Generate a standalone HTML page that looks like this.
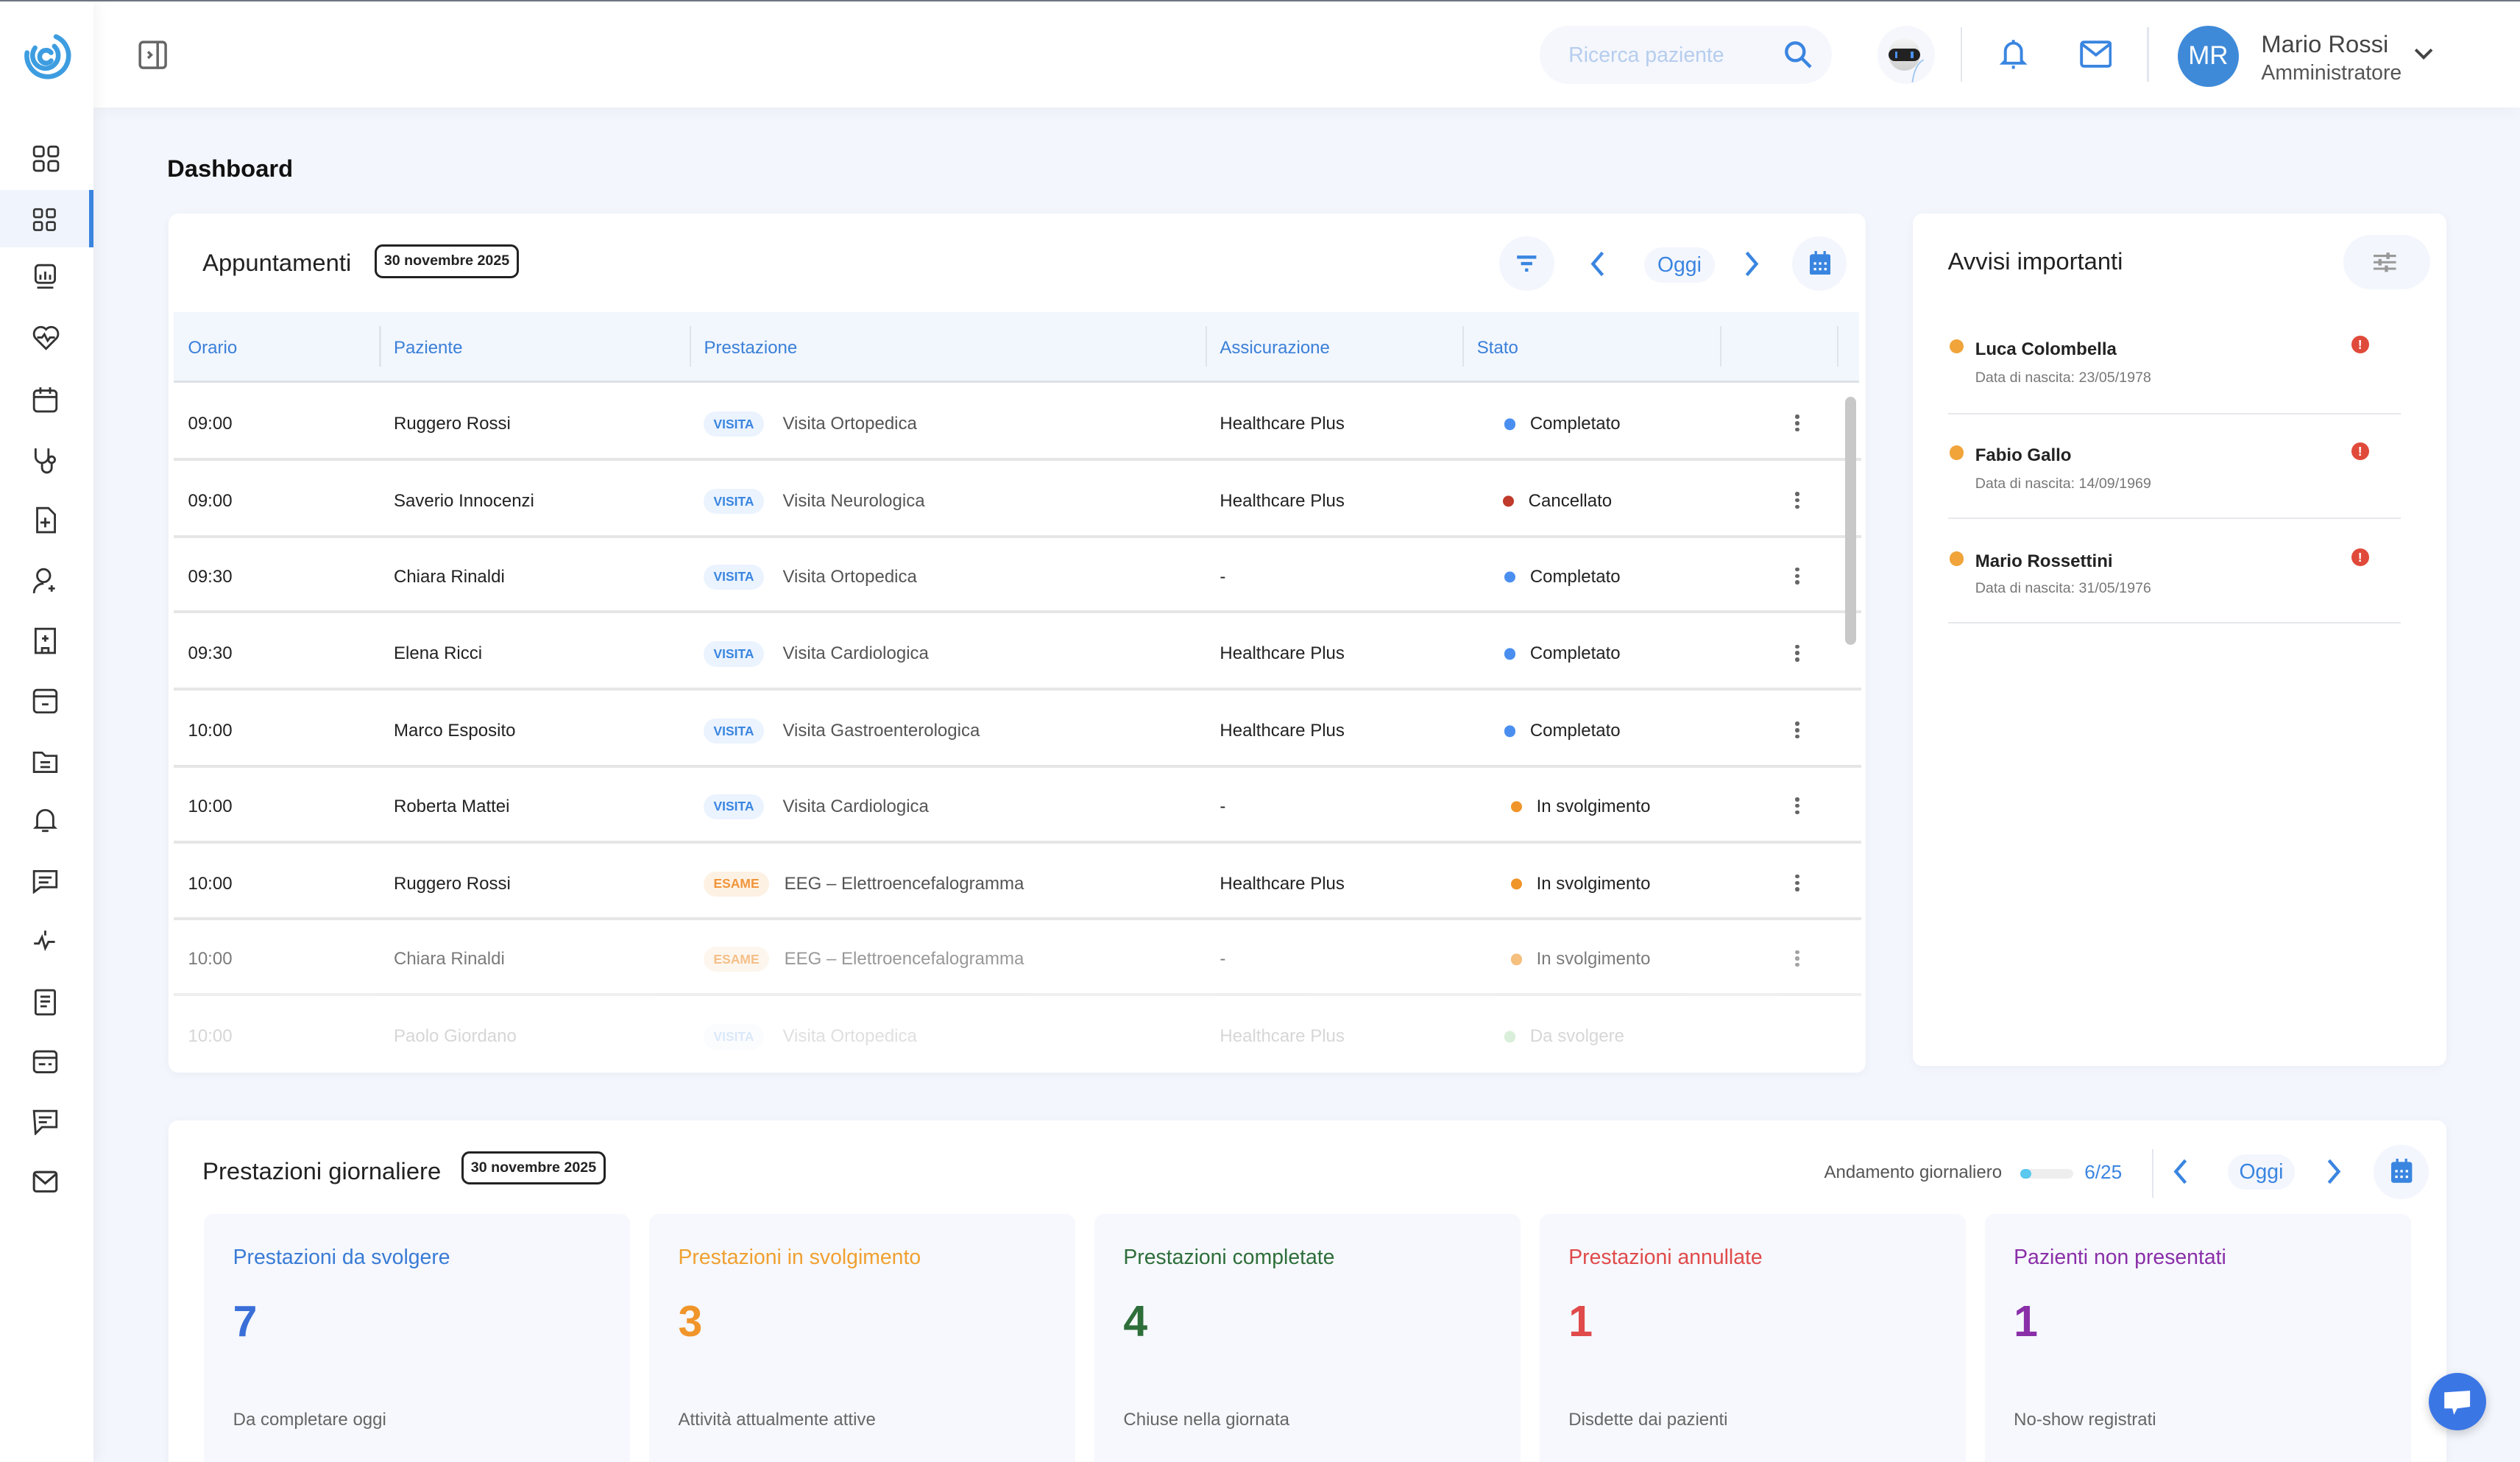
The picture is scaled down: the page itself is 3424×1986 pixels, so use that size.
<!DOCTYPE html>
<html><head><meta charset="utf-8"><style>
*{box-sizing:border-box;margin:0;padding:0}
html,body{width:3424px;height:1986px;overflow:hidden;background:#f3f6fd}
#root{zoom:2.18367;width:1568px;height:910px;position:relative;font-family:"Liberation Sans",sans-serif;color:#222;background:#f3f6fd;overflow:hidden}
.abs{position:absolute}
.topline{left:0;top:0;width:1568px;height:1px;background:#6b7680;z-index:5}
.side{left:0;top:0;width:58px;height:910px;background:#fff;box-shadow:2px 0 8px rgba(0,0,0,.05);z-index:3}
.side svg{position:absolute;left:20px}
.hdr{left:58px;top:0;width:1510px;height:67px;background:#fff;box-shadow:0 2px 10px rgba(0,0,0,.04)}
.card{background:#fff;border-radius:6px;box-shadow:0 1px 6px rgba(0,0,0,.04)}
.badge{border:1.5px solid #222;border-radius:5px;font-size:9px;font-weight:bold;text-align:center;line-height:18px;height:21px}
.circ{border-radius:50%;background:#f3f6fd}
.th{font-size:11px;color:#3a80d8;top:210px}
.sep{width:1px;background:#dfe3ea;top:203px;height:25px}
.row{left:108px;width:1050px;height:47.6px;border-bottom:2px solid #e6e6e6;font-size:11px;color:#222}
.row span{position:absolute;top:calc(50% + 2px);transform:translateY(-50%)}
.tag{font-size:8px;font-weight:bold;border-radius:8px;padding:3px 6px}
.v{color:#3a85e0;background:#eaf3fe}
.e{color:#f0953a;background:#fdf1e4}
.dot{width:7px;height:7px;border-radius:50%}
.kb{width:2.5px;height:2.5px;background:#666;border-radius:50%;position:absolute}
.stat{top:755px;width:265px;height:160px;background:#f6f8fd;border-radius:6px}
.stat .t{position:absolute;left:18px;top:20px;font-size:13px}
.stat .n{position:absolute;left:18px;top:52px;font-size:27px;font-weight:bold}
.stat .s{position:absolute;left:18px;top:122px;font-size:11px;color:#666}
</style></head><body><div id="root">
<div class="abs topline"></div>
<div class="abs side">
 <svg style="left:13px;top:19px" width="32" height="32" viewBox="0 0 32 32" fill="none" stroke="#3d9de0" stroke-width="3" stroke-linecap="round"><path d="M22 4A13 13 0 1 1 4 14"/><path d="M21 10A8 8 0 1 1 9 11"/><path d="M19 14A4 4 0 1 0 19 19"/></svg>
 <div class="abs" style="left:0;top:118px;width:58px;height:36px;background:#f0f4fc;border-right:3px solid #3a85e0"></div>
 <svg style="top:90px" width="17" height="17" viewBox="0 0 17 17" fill="none" stroke="#333" stroke-width="1.3"><rect x="1" y="1" width="6" height="6" rx="1.5"/><rect x="10" y="1" width="6" height="6" rx="1.5"/><rect x="1" y="10" width="6" height="6" rx="1.5"/><rect x="10" y="10" width="6" height="6" rx="1.5"/></svg>
 <svg style="top:129px" width="15" height="15" viewBox="0 0 15 15" fill="none" stroke="#333" stroke-width="1.2"><rect x="1" y="1" width="5" height="5" rx="1"/><rect x="9" y="1" width="5" height="5" rx="1"/><rect x="1" y="9" width="5" height="5" rx="1"/><rect x="9" y="9" width="5" height="5" rx="1"/></svg>
 <svg style="top:164px" width="16" height="16" viewBox="0 0 16 16" fill="none" stroke="#333" stroke-width="1.3"><rect x="2" y="1" width="12" height="11" rx="2"/><path d="M5 10V7M8 10V5M11 10V7M3 15h10"/></svg>
 <svg style="top:202px" width="17" height="16" viewBox="0 0 17 16" fill="none" stroke="#333" stroke-width="1.3"><path d="M8.5 15L2 8.5A4 4 0 0 1 8.5 3A4 4 0 0 1 15 8.5Z"/><path d="M3 8h3l1.5-2 2 4 1.5-2h3"/></svg>
 <svg style="top:240px" width="16" height="17" viewBox="0 0 16 17" fill="none" stroke="#333" stroke-width="1.3"><rect x="1" y="3" width="14" height="13" rx="2"/><path d="M1 7h14M5 1v4M11 1v4"/></svg>
 <svg style="top:278px" width="16" height="18" viewBox="0 0 16 18" fill="none" stroke="#333" stroke-width="1.3"><path d="M2 1v5a4 4 0 0 0 8 0V1M6 10v3a3 3 0 0 0 6 0v-3"/><circle cx="12" cy="8" r="2"/></svg>
 <svg style="top:315px" width="16" height="17" viewBox="0 0 16 17" fill="none" stroke="#333" stroke-width="1.3"><path d="M3 1h7l4 4v11H3z"/><path d="M8 7v6M5 10h6"/></svg>
 <svg style="top:353px" width="16" height="17" viewBox="0 0 16 17" fill="none" stroke="#333" stroke-width="1.3"><circle cx="7" cy="5" r="4"/><path d="M1 16c0-4 3-6 6-6M12 11v4M10 13h4"/></svg>
 <svg style="top:390px" width="16" height="17" viewBox="0 0 16 17" fill="none" stroke="#333" stroke-width="1.3"><rect x="2" y="1" width="12" height="15"/><path d="M8 5v4M6 7h4M6 16v-3h4v3"/></svg>
 <svg style="top:428px" width="16" height="16" viewBox="0 0 16 16" fill="none" stroke="#333" stroke-width="1.3"><rect x="1" y="1" width="14" height="14" rx="2"/><path d="M1 5h14M6 10h4"/></svg>
 <svg style="top:466px" width="16" height="15" viewBox="0 0 16 15" fill="none" stroke="#333" stroke-width="1.3"><path d="M1 2h5l2 2h7v10H1z"/><path d="M5 8h6M5 11h6"/></svg>
 <svg style="top:502px" width="16" height="17" viewBox="0 0 16 17" fill="none" stroke="#333" stroke-width="1.3"><path d="M3 12V7a5 5 0 0 1 10 0v5l1 1H2z"/><path d="M6 15h4"/></svg>
 <svg style="top:540px" width="16" height="16" viewBox="0 0 16 16" fill="none" stroke="#333" stroke-width="1.3"><path d="M1 2h14v10H5l-4 3z"/><path d="M4 6h8M4 9h6"/></svg>
 <svg style="top:578px" width="16" height="16" viewBox="0 0 16 16" fill="none" stroke="#333" stroke-width="1.3"><path d="M1 9h3l2-4 2 7 2-4h4M8 1v3"/></svg>
 <svg style="top:615px" width="16" height="17" viewBox="0 0 16 17" fill="none" stroke="#333" stroke-width="1.3"><rect x="2" y="1" width="12" height="15" rx="1"/><path d="M5 5h6M5 8h6M5 11h4"/></svg>
 <svg style="top:653px" width="16" height="15" viewBox="0 0 16 15" fill="none" stroke="#333" stroke-width="1.3"><rect x="1" y="1" width="14" height="13" rx="2"/><path d="M1 5h14M4 9h4M10 9h2"/></svg>
 <svg style="top:690px" width="16" height="16" viewBox="0 0 16 16" fill="none" stroke="#333" stroke-width="1.3"><path d="M1 1h14v10H6l-4 4z"/><path d="M4 5h8M4 8h5"/></svg>
 <svg style="top:728px" width="16" height="14" viewBox="0 0 16 14" fill="none" stroke="#333" stroke-width="1.4"><rect x="1" y="1" width="14" height="12" rx="1.5"/><path d="M1 2l7 6 7-6"/></svg>
</div>
<div class="abs hdr">
 <svg class="abs" style="left:28px;top:25px" width="18" height="18" viewBox="0 0 18 18" fill="none" stroke="#666" stroke-width="1.6"><rect x="1" y="1" width="16" height="16" rx="2"/><path d="M12 1v16M6 7l2 2-2 2"/></svg>
 <div class="abs" style="left:900px;top:16px;width:182px;height:36px;border-radius:18px;background:#f5f7fc"></div>
 <div class="abs" style="left:918px;top:27px;font-size:13px;color:#b6cdee">Ricerca paziente</div>
 <svg class="abs" style="left:1052px;top:25px" width="18" height="18" viewBox="0 0 18 18" fill="none" stroke="#3a85e0" stroke-width="2"><circle cx="7" cy="7" r="5.5"/><path d="M11 11l5.5 5.5"/></svg>
 <div class="abs circ" style="left:1110px;top:16px;width:36px;height:36px;background:#f5f7fc"></div>
 <div class="abs" style="left:1117px;top:24px;width:20px;height:20px;border-radius:10px;background:linear-gradient(#f4f4f4,#cfcfcf)"></div>
 <div class="abs" style="left:1117px;top:30px;width:20px;height:8px;border-radius:4px;background:#222"></div>
 <div class="abs" style="left:1121px;top:32px;width:1.5px;height:4px;background:#4a8ff0"></div>
 <div class="abs" style="left:1131px;top:32px;width:1.5px;height:4px;background:#4a8ff0"></div>
 <svg class="abs" style="left:1130px;top:36px" width="10" height="16" viewBox="0 0 10 16" fill="none" stroke="#9cc4f0" stroke-width="0.8"><path d="M9 1C5 3 3 8 2 15"/></svg>
 <div class="abs" style="left:1162px;top:17px;width:1px;height:34px;background:#e3e6ec"></div>
 <svg class="abs" style="left:1186px;top:24px" width="18" height="20" viewBox="0 0 18 20" fill="none" stroke="#3a85e0" stroke-width="1.8"><path d="M4 14V8a5 5 0 0 1 10 0v6l1.5 1.5h-13z"/><path d="M9 17v2M9 1v2"/></svg>
 <svg class="abs" style="left:1236px;top:25px" width="20" height="17" viewBox="0 0 20 17" fill="none" stroke="#3a85e0" stroke-width="1.8"><rect x="1" y="1" width="18" height="15" rx="1.5"/><path d="M1 2l9 7 9-7"/></svg>
 <div class="abs" style="left:1278px;top:17px;width:1px;height:34px;background:#e3e6ec"></div>
 <div class="abs circ" style="left:1297px;top:16px;width:38px;height:38px;background:#3f8ad8;color:#fff;font-size:16px;text-align:center;line-height:38px">MR</div>
 <div class="abs" style="left:1349px;top:19px;font-size:15px;color:#444">Mario Rossi</div>
 <div class="abs" style="left:1349px;top:38px;font-size:13px;color:#555">Amministratore</div>
 <svg class="abs" style="left:1444px;top:29px" width="12" height="9" viewBox="0 0 12 9" fill="none" stroke="#444" stroke-width="1.8"><path d="M1 2l5 5 5-5"/></svg>
</div>
<div class="abs" style="left:104px;top:96px;font-size:15px;font-weight:bold;color:#111">Dashboard</div>

<div class="abs card" style="left:105px;top:133px;width:1056px;height:534px;overflow:hidden">
 <div class="abs" style="left:21px;top:22px;font-size:15px">Appuntamenti</div>
 <div class="abs badge" style="left:128px;top:19px;width:90px">30 novembre 2025</div>
 <div class="abs circ" style="left:828px;top:14px;width:34px;height:34px"></div>
 <svg class="abs" style="left:838px;top:25px" width="14" height="12" viewBox="0 0 14 12" fill="none" stroke="#3a85e0" stroke-width="2"><path d="M1 2h12M3.5 6h7M6 10h2"/></svg>
 <svg class="abs" style="left:884px;top:23px" width="10" height="16" viewBox="0 0 10 16" fill="none" stroke="#3a85e0" stroke-width="2"><path d="M8 1L2 8l6 7"/></svg>
 <div class="abs" style="left:918px;top:21px;width:44px;height:22px;border-radius:11px;background:#f3f6fd;color:#3a85e0;font-size:13px;text-align:center;line-height:22px">Oggi</div>
 <svg class="abs" style="left:980px;top:23px" width="10" height="16" viewBox="0 0 10 16" fill="none" stroke="#3a85e0" stroke-width="2"><path d="M2 1l6 7-6 7"/></svg>
 <div class="abs circ" style="left:1010px;top:14px;width:34px;height:34px"></div>
 <svg class="abs" style="left:1021px;top:23px" width="13" height="15" viewBox="0 0 13 15"><rect x="0" y="2" width="13" height="13" rx="1.5" fill="#3a85e0"/><rect x="3" y="0" width="1.5" height="3" fill="#3a85e0"/><rect x="8.5" y="0" width="1.5" height="3" fill="#3a85e0"/><g fill="#fff"><rect x="2.5" y="7" width="1.5" height="1.5"/><rect x="5.7" y="7" width="1.5" height="1.5"/><rect x="9" y="7" width="1.5" height="1.5"/><rect x="2.5" y="10.5" width="1.5" height="1.5"/><rect x="5.7" y="10.5" width="1.5" height="1.5"/><rect x="9" y="10.5" width="1.5" height="1.5"/></g></svg>
 <div class="abs" style="left:3px;top:61px;width:1049px;height:44px;background:#f2f6fd;border-bottom:1.5px solid #dde1e8"></div>
</div>
<div class="abs th" style="left:117px">Orario</div>
<div class="abs th" style="left:245px">Paziente</div>
<div class="abs th" style="left:438px">Prestazione</div>
<div class="abs th" style="left:759px">Assicurazione</div>
<div class="abs th" style="left:919px">Stato</div>
<div class="abs sep" style="left:236px"></div><div class="abs sep" style="left:429px"></div><div class="abs sep" style="left:750px"></div><div class="abs sep" style="left:910px"></div><div class="abs sep" style="left:1070px"></div><div class="abs sep" style="left:1143px"></div>

<div class="abs row" style="top:239px"><span style="left:9px">09:00</span><span style="left:137px">Ruggero Rossi</span><span class="tag v" style="left:330px">VISITA</span><span style="left:379px;color:#555">Visita Ortopedica</span><span style="left:651px">Healthcare Plus</span><span class="dot" style="left:828px;background:#4a8ff0"></span><span style="left:844px">Completato</span><i class="kb" style="left:1009px;top:19px"></i><i class="kb" style="left:1009px;top:23px"></i><i class="kb" style="left:1009px;top:27px"></i></div>
<div class="abs row" style="top:287px"><span style="left:9px">09:00</span><span style="left:137px">Saverio Innocenzi</span><span class="tag v" style="left:330px">VISITA</span><span style="left:379px;color:#555">Visita Neurologica</span><span style="left:651px">Healthcare Plus</span><span class="dot" style="left:827px;background:#c0392b"></span><span style="left:843px">Cancellato</span><i class="kb" style="left:1009px;top:19px"></i><i class="kb" style="left:1009px;top:23px"></i><i class="kb" style="left:1009px;top:27px"></i></div>
<div class="abs row" style="top:334px"><span style="left:9px">09:30</span><span style="left:137px">Chiara Rinaldi</span><span class="tag v" style="left:330px">VISITA</span><span style="left:379px;color:#555">Visita Ortopedica</span><span style="left:651px">-</span><span class="dot" style="left:828px;background:#4a8ff0"></span><span style="left:844px">Completato</span><i class="kb" style="left:1009px;top:19px"></i><i class="kb" style="left:1009px;top:23px"></i><i class="kb" style="left:1009px;top:27px"></i></div>
<div class="abs row" style="top:382px"><span style="left:9px">09:30</span><span style="left:137px">Elena Ricci</span><span class="tag v" style="left:330px">VISITA</span><span style="left:379px;color:#555">Visita Cardiologica</span><span style="left:651px">Healthcare Plus</span><span class="dot" style="left:828px;background:#4a8ff0"></span><span style="left:844px">Completato</span><i class="kb" style="left:1009px;top:19px"></i><i class="kb" style="left:1009px;top:23px"></i><i class="kb" style="left:1009px;top:27px"></i></div>
<div class="abs row" style="top:430px"><span style="left:9px">10:00</span><span style="left:137px">Marco Esposito</span><span class="tag v" style="left:330px">VISITA</span><span style="left:379px;color:#555">Visita Gastroenterologica</span><span style="left:651px">Healthcare Plus</span><span class="dot" style="left:828px;background:#4a8ff0"></span><span style="left:844px">Completato</span><i class="kb" style="left:1009px;top:19px"></i><i class="kb" style="left:1009px;top:23px"></i><i class="kb" style="left:1009px;top:27px"></i></div>
<div class="abs row" style="top:477px"><span style="left:9px">10:00</span><span style="left:137px">Roberta Mattei</span><span class="tag v" style="left:330px">VISITA</span><span style="left:379px;color:#555">Visita Cardiologica</span><span style="left:651px">-</span><span class="dot" style="left:832px;background:#f0952a"></span><span style="left:848px">In svolgimento</span><i class="kb" style="left:1009px;top:19px"></i><i class="kb" style="left:1009px;top:23px"></i><i class="kb" style="left:1009px;top:27px"></i></div>
<div class="abs row" style="top:525px"><span style="left:9px">10:00</span><span style="left:137px">Ruggero Rossi</span><span class="tag e" style="left:330px">ESAME</span><span style="left:380px;color:#555">EEG – Elettroencefalogramma</span><span style="left:651px">Healthcare Plus</span><span class="dot" style="left:832px;background:#f0952a"></span><span style="left:848px">In svolgimento</span><i class="kb" style="left:1009px;top:19px"></i><i class="kb" style="left:1009px;top:23px"></i><i class="kb" style="left:1009px;top:27px"></i></div>
<div class="abs row" style="top:572px;opacity:.6"><span style="left:9px">10:00</span><span style="left:137px">Chiara Rinaldi</span><span class="tag e" style="left:330px">ESAME</span><span style="left:380px;color:#555">EEG – Elettroencefalogramma</span><span style="left:651px">-</span><span class="dot" style="left:832px;background:#f0952a"></span><span style="left:848px">In svolgimento</span><i class="kb" style="left:1009px;top:19px"></i><i class="kb" style="left:1009px;top:23px"></i><i class="kb" style="left:1009px;top:27px"></i></div>
<div class="abs row" style="top:620px;opacity:.18;border:none;height:46px"><span style="left:9px">10:00</span><span style="left:137px">Paolo Giordano</span><span class="tag v" style="left:330px">VISITA</span><span style="left:379px;color:#555">Visita Ortopedica</span><span style="left:651px">Healthcare Plus</span><span class="dot" style="left:828px;background:#3a3"></span><span style="left:844px">Da svolgere</span></div>
<div class="abs" style="left:1148px;top:247px;width:7px;height:154px;border-radius:4px;background:#c8c8c8"></div>

<div class="abs card" style="left:1190px;top:133px;width:332px;height:530px">
 <div class="abs" style="left:22px;top:21px;font-size:15px">Avvisi importanti</div>
 <div class="abs circ" style="left:268px;top:13px;width:54px;height:34px;border-radius:17px"></div>
 <svg class="abs" style="left:287px;top:23px" width="14" height="14" viewBox="0 0 14 14" fill="none" stroke="#999" stroke-width="1.4"><path d="M0 3h14M0 7h14M0 11h14"/><path d="M9 1v4M4 5v4M8 9v4" stroke-width="2"/></svg>
</div>
<div class="abs" style="left:1212px;top:257px;width:282px;height:1px;background:#e6e8ec"></div>
<div class="abs" style="left:1212px;top:322px;width:282px;height:1px;background:#e6e8ec"></div>
<div class="abs" style="left:1212px;top:387px;width:282px;height:1px;background:#e6e8ec"></div>
<div class="abs dot" style="left:1213px;top:211px;width:9px;height:9px;background:#f0a43a"></div><div class="abs" style="left:1229px;top:211px;font-size:11px;font-weight:bold">Luca Colombella</div><div class="abs" style="left:1229px;top:230px;font-size:9px;color:#777">Data di nascita: 23/05/1978</div><div class="abs dot" style="left:1463px;top:209px;width:11px;height:11px;background:#e04a3a;color:#fff;font-size:8px;text-align:center;line-height:11px;font-weight:bold">!</div>
<div class="abs dot" style="left:1213px;top:277px;width:9px;height:9px;background:#f0a43a"></div><div class="abs" style="left:1229px;top:277px;font-size:11px;font-weight:bold">Fabio Gallo</div><div class="abs" style="left:1229px;top:296px;font-size:9px;color:#777">Data di nascita: 14/09/1969</div><div class="abs dot" style="left:1463px;top:275px;width:11px;height:11px;background:#e04a3a;color:#fff;font-size:8px;text-align:center;line-height:11px;font-weight:bold">!</div>
<div class="abs dot" style="left:1213px;top:343px;width:9px;height:9px;background:#f0a43a"></div><div class="abs" style="left:1229px;top:343px;font-size:11px;font-weight:bold">Mario Rossettini</div><div class="abs" style="left:1229px;top:361px;font-size:9px;color:#777">Data di nascita: 31/05/1976</div><div class="abs dot" style="left:1463px;top:341px;width:11px;height:11px;background:#e04a3a;color:#fff;font-size:8px;text-align:center;line-height:11px;font-weight:bold">!</div>

<div class="abs card" style="left:105px;top:697px;width:1417px;height:230px">
 <div class="abs" style="left:21px;top:23px;font-size:15px">Prestazioni giornaliere</div>
 <div class="abs badge" style="left:182px;top:19px;width:90px">30 novembre 2025</div>
 <div class="abs" style="left:1030px;top:26px;font-size:11px;color:#555">Andamento giornaliero</div>
 <div class="abs" style="left:1152px;top:30px;width:33px;height:6px;border-radius:3px;background:#eee"></div>
 <div class="abs" style="left:1152px;top:30px;width:7px;height:6px;border-radius:3px;background:#5bc8ee"></div>
 <div class="abs" style="left:1192px;top:25px;font-size:12px;color:#3a85e0">6/25</div>
 <div class="abs" style="left:1234px;top:18px;width:1px;height:30px;background:#e3e6ec"></div>
 <svg class="abs" style="left:1247px;top:24px" width="10" height="16" viewBox="0 0 10 16" fill="none" stroke="#3a85e0" stroke-width="2"><path d="M8 1L2 8l6 7"/></svg>
 <div class="abs" style="left:1281px;top:21px;width:42px;height:22px;border-radius:11px;background:#f3f6fd;color:#3a85e0;font-size:13px;text-align:center;line-height:22px">Oggi</div>
 <svg class="abs" style="left:1342px;top:24px" width="10" height="16" viewBox="0 0 10 16" fill="none" stroke="#3a85e0" stroke-width="2"><path d="M2 1l6 7-6 7"/></svg>
 <div class="abs circ" style="left:1372px;top:15px;width:34px;height:34px"></div>
 <svg class="abs" style="left:1383px;top:24px" width="13" height="15" viewBox="0 0 13 15"><rect x="0" y="2" width="13" height="13" rx="1.5" fill="#3a85e0"/><rect x="3" y="0" width="1.5" height="3" fill="#3a85e0"/><rect x="8.5" y="0" width="1.5" height="3" fill="#3a85e0"/><g fill="#fff"><rect x="2.5" y="7" width="1.5" height="1.5"/><rect x="5.7" y="7" width="1.5" height="1.5"/><rect x="9" y="7" width="1.5" height="1.5"/><rect x="2.5" y="10.5" width="1.5" height="1.5"/><rect x="5.7" y="10.5" width="1.5" height="1.5"/><rect x="9" y="10.5" width="1.5" height="1.5"/></g></svg>
</div>
<div class="abs stat" style="left:127px"><div class="t" style="color:#3a7bd5">Prestazioni da svolgere</div><div class="n" style="color:#3a6fd8">7</div><div class="s">Da completare oggi</div></div>
<div class="abs stat" style="left:404px"><div class="t" style="color:#f0a030">Prestazioni in svolgimento</div><div class="n" style="color:#f0952a">3</div><div class="s">Attività attualmente attive</div></div>
<div class="abs stat" style="left:681px"><div class="t" style="color:#2e6e3a">Prestazioni completate</div><div class="n" style="color:#2e6e3a">4</div><div class="s">Chiuse nella giornata</div></div>
<div class="abs stat" style="left:958px"><div class="t" style="color:#e04a4a">Prestazioni annullate</div><div class="n" style="color:#e04a4a">1</div><div class="s">Disdette dai pazienti</div></div>
<div class="abs stat" style="left:1235px"><div class="t" style="color:#8a2fa8">Pazienti non presentati</div><div class="n" style="color:#8a2fa8">1</div><div class="s">No-show registrati</div></div>
<div class="abs circ" style="left:1511px;top:854px;width:36px;height:36px;background:#3b76e5;box-shadow:0 2px 6px rgba(0,0,0,.2)"></div>
<svg class="abs" style="left:1520px;top:864px" width="18" height="17" viewBox="0 0 18 17"><path d="M1 2l16-1v10l-8 1-2 4-1-4H1z" fill="#fff"/></svg>
</div></body></html>
